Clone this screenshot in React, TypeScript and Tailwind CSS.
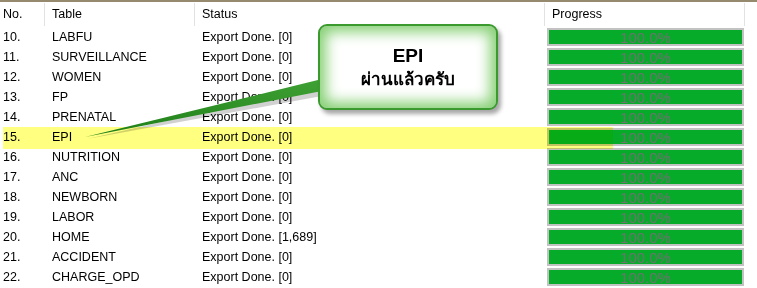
const rows: [string, string, string][] = [
  ["10.", "LABFU", "Export Done. [0]"],
  ["11.", "SURVEILLANCE", "Export Done. [0]"],
  ["12.", "WOMEN", "Export Done. [0]"],
  ["13.", "FP", "Export Done. [0]"],
  ["14.", "PRENATAL", "Export Done. [0]"],
  ["15.", "EPI", "Export Done. [0]"],
  ["16.", "NUTRITION", "Export Done. [0]"],
  ["17.", "ANC", "Export Done. [0]"],
  ["18.", "NEWBORN", "Export Done. [0]"],
  ["19.", "LABOR", "Export Done. [0]"],
  ["20.", "HOME", "Export Done. [1,689]"],
  ["21.", "ACCIDENT", "Export Done. [0]"],
  ["22.", "CHARGE_OPD", "Export Done. [0]"],
];

const ProgressBar = () => (
  <div className="ml-[2px] w-[197px] h-[18px] border-2 border-[#c2c2c2] bg-[#06ab2a] flex items-center justify-center">
    <span className="text-[15px] leading-none text-[#707070]">100.0%</span>
  </div>
);

export default function App() {
  return (
    <div
      className="relative w-[757px] h-[288px] bg-white overflow-hidden text-black"
      style={{ fontFamily: '"Liberation Sans", Arial, sans-serif' }}
    >
      <div className="h-[2px] bg-[#958a6d]" />

      {/* header */}
      <div className="grid grid-cols-[45px_150px_350px_200px] h-[25px] text-[12.5px]">
        <div className="pl-[3px] flex items-center border-r border-[#e2e2e2] my-[1px]">No.</div>
        <div className="pl-[7px] flex items-center border-r border-[#e2e2e2] my-[1px]">Table</div>
        <div className="pl-[7px] flex items-center border-r border-[#e2e2e2] my-[1px]">Status</div>
        <div className="pl-[7px] flex items-center border-r border-[#e2e2e2] my-[1px]">Progress</div>
      </div>

      {/* rows */}
      {rows.map(([no, table, status]) => (
        <div key={no} className="grid grid-cols-[45px_150px_350px_200px] h-[20px] text-[12.5px] items-center">
          <div className="pl-[3px] pt-[1px]">{no}</div>
          <div className="pl-[7px] pt-[1px]">{table}</div>
          <div className="pl-[7px] pt-[1px]">{status}</div>
          <div className="flex items-center">
            <ProgressBar />
          </div>
        </div>
      ))}

      {/* highlighter over EPI row */}
      <div className="absolute left-[3px] top-[127px] w-[610px] h-[22px] bg-[#ffff80] mix-blend-multiply" />

      {/* callout tail */}
      <svg className="absolute left-0 top-0" width="757" height="288">
        <defs>
          <linearGradient id="tail" x1="0" y1="1" x2="1" y2="0">
            <stop offset="0" stopColor="#1c7d16" />
            <stop offset="1" stopColor="#3fa034" />
          </linearGradient>
        </defs>
        <polygon points="87,139 322,85 322,96" fill="#000" opacity="0.18" />
        <polygon points="85,137 322,79 322,91" fill="url(#tail)" />
      </svg>

      {/* callout box */}
      <div className="absolute left-[318px] top-[24px] w-[180px] h-[86px] rounded-[9px] border-2 border-[#3a9a2e] bg-white shadow-[inset_0_0_14px_6px_#86d074,3px_4px_4px_rgba(0,0,0,0.35)] flex flex-col items-center justify-center">
        <div className="text-[19px] font-bold leading-[24px] mt-[2px]">EPI</div>
        <div
          className="text-[17px] font-bold leading-[24px]"
          style={{ fontFamily: '"Liberation Sans", "Noto Sans", "DejaVu Sans", sans-serif' }}
        >
          ผ่านแล้วครับ
        </div>
      </div>
    </div>
  );
}
